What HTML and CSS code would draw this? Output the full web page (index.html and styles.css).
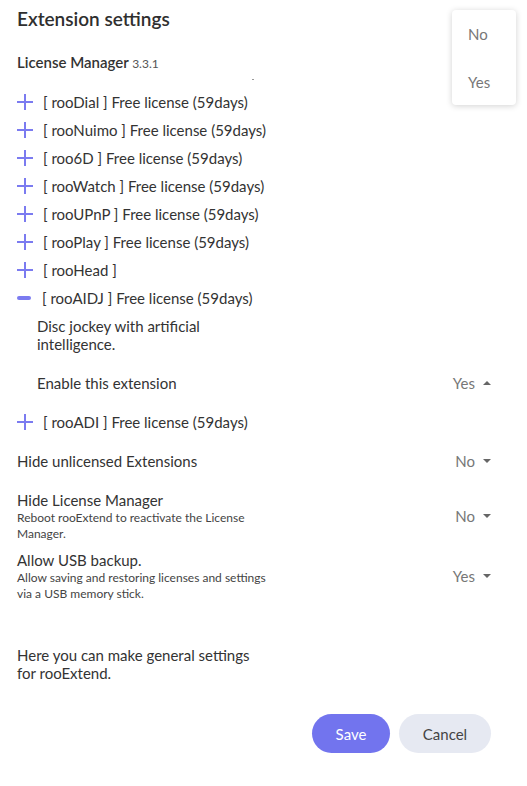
FILE: index.html
```html
<!DOCTYPE html>
<html lang="en">
<head>
    <meta charset="UTF-8">
    <meta name="viewport" content="width=device-width, initial-scale=1.0">
    <title>Extension settings</title>
    <link rel="stylesheet" href="styles.css">
</head>
<body>
    <div class="panel">
        <h1 class="title">Extension settings</h1>

        <div class="manager">License Manager <span class="version">3.3.1</span></div>
        <div class="scroll-hint"><span></span></div>

        <ul class="ext-list">
            <li class="ext"><span class="icon plus"></span>[ rooDial ] Free license (59days)</li>
            <li class="ext"><span class="icon plus"></span>[ rooNuimo ] Free license (59days)</li>
            <li class="ext"><span class="icon plus"></span>[ roo6D ] Free license (59days)</li>
            <li class="ext"><span class="icon plus"></span>[ rooWatch ] Free license (59days)</li>
            <li class="ext"><span class="icon plus"></span>[ rooUPnP ] Free license (59days)</li>
            <li class="ext"><span class="icon plus"></span>[ rooPlay ] Free license (59days)</li>
            <li class="ext"><span class="icon plus"></span>[ rooHead ]</li>
            <li class="ext open"><span class="icon minus"></span>[ rooAIDJ ] Free license (59days)</li>
        </ul>

        <div class="ext-detail">
            <p class="desc">Disc jockey with artificial intelligence.</p>
            <div class="setting inner">
                <div class="label">Enable this extension</div>
                <div class="select">Yes <span class="caret up"></span></div>
            </div>
        </div>

        <ul class="ext-list">
            <li class="ext"><span class="icon plus"></span>[ rooADI ] Free license (59days)</li>
        </ul>

        <div class="setting">
            <div class="label">Hide unlicensed Extensions</div>
            <div class="select">No <span class="caret"></span></div>
        </div>

        <div class="setting big first">
            <div>
                <div class="label">Hide License Manager</div>
                <div class="sub">Reboot rooExtend to reactivate the License Manager.</div>
            </div>
            <div class="select">No <span class="caret"></span></div>
        </div>

        <div class="setting big">
            <div>
                <div class="label">Allow USB backup.</div>
                <div class="sub">Allow saving and restoring licenses and settings via a USB memory stick.</div>
            </div>
            <div class="select">Yes <span class="caret"></span></div>
        </div>

        <p class="footer-note">Here you can make general settings for rooExtend.</p>

        <div class="actions">
            <button class="btn save">Save</button>
            <button class="btn cancel">Cancel</button>
        </div>
    </div>

    <div class="popup">
        <div class="option">No</div>
        <div class="option">Yes</div>
    </div>
</body>
</html>
```

FILE: styles.css
```css
body {
    font-family: Lato, "Open Sans", sans-serif;
    margin: 0;
    background-color: #ffffff;
    color: #333333;
}
.panel {
    padding: 6px 36px 0 17px;
}
.title {
    font-size: 19px;
    font-weight: 600;
    margin: 0;
    line-height: 26px;
    color: #2f2f2f;
}
.manager {
    margin-top: 21px;
    font-size: 15px;
    font-weight: 600;
    line-height: 18px;
}
.version {
    font-size: 12px;
    font-weight: 400;
    color: #555555;
}
.scroll-hint {
    height: 15px;
    position: relative;
}
.scroll-hint span {
    position: absolute;
    left: 235px;
    top: 6px;
    width: 2px;
    height: 1px;
    background-color: #999999;
}
.ext-list {
    list-style: none;
    margin: 0;
    padding: 0;
}
.ext {
    display: flex;
    align-items: center;
    height: 28px;
    font-size: 15px;
}
.icon {
    position: relative;
    width: 16px;
    height: 16px;
    margin-right: 10px;
}
.plus::before,
.plus::after {
    content: "";
    position: absolute;
    background-color: #7b7bf0;
}
.plus::before {
    left: 0;
    top: 7px;
    width: 16px;
    height: 2px;
}
.plus::after {
    left: 7px;
    top: 0;
    width: 2px;
    height: 16px;
}
.minus {
    margin-right: 9px;
}
.minus::before {
    content: "";
    position: absolute;
    left: 0;
    top: 6px;
    width: 14px;
    height: 4px;
    border-radius: 2px;
    background-color: #7b7bf0;
}
.ext-detail {
    padding-left: 20px;
}
.desc {
    margin: 5px 0 0;
    width: 190px;
    font-size: 15px;
    line-height: 18px;
}
.setting {
    display: flex;
    justify-content: space-between;
    align-items: center;
    font-size: 15px;
    height: 50px;
}
.setting.inner {
    margin-top: 5px;
}
.setting.big {
    height: auto;
    margin-top: 8px;
}
.setting.big.first {
    margin-top: 4px;
}
.setting.big .label {
    line-height: 20px;
}
.sub {
    font-size: 12px;
    line-height: 16px;
    width: 258px;
    color: #444444;
}
.select {
    display: flex;
    align-items: center;
    color: #777777;
    font-size: 15px;
}
.caret {
    width: 0;
    height: 0;
    margin-left: 8px;
    border-left: 4px solid transparent;
    border-right: 4px solid transparent;
    border-top: 4px solid #666666;
}
.caret.up {
    border-top: none;
    border-bottom: 4px solid #666666;
}
.footer-note {
    margin: 44px 0 0;
    width: 240px;
    font-size: 15px;
    line-height: 18px;
}
.actions {
    display: flex;
    justify-content: flex-end;
    gap: 9px;
    margin-top: 32px;
}
.btn {
    font-family: Lato, sans-serif;
    font-size: 15px;
    height: 39px;
    border: none;
    border-radius: 20px;
    cursor: pointer;
}
.save {
    width: 78px;
    background-color: #7274ee;
    color: #ffffff;
}
.cancel {
    width: 92px;
    background-color: #e6e9f2;
    color: #444444;
}
.popup {
    position: absolute;
    left: 452px;
    top: 10px;
    width: 64px;
    height: 95px;
    background-color: #ffffff;
    border-radius: 4px;
    box-shadow: 0 1px 6px rgba(0, 0, 0, 0.18);
}
.option {
    padding-left: 16px;
    height: 48px;
    line-height: 48px;
    font-size: 15px;
    color: #777777;
}
```
